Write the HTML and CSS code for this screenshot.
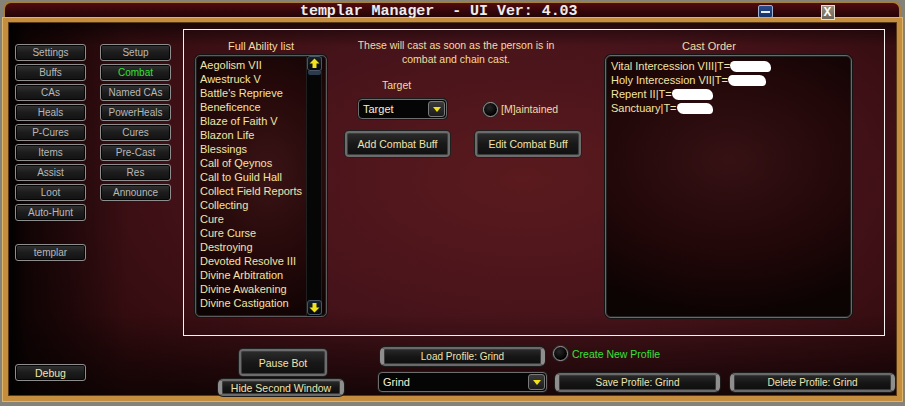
FILE: index.html
```html
<!DOCTYPE html>
<html>
<head>
<meta charset="utf-8">
<link rel="stylesheet" href="styles.css">
</head>
<body>
<div class="window">
  <div class="titlebar">
    <span class="title">templar Manager  - UI Ver: 4.03</span>
    <span class="tb-btn tb-min"><span class="dash"></span></span>
    <span class="tb-btn tb-close">X</span>
  </div>
  <div class="frame">
    <nav class="nav">
      <div class="nav-grid">
        <button class="btn">Settings</button>
        <button class="btn">Setup</button>
        <button class="btn">Buffs</button>
        <button class="btn active">Combat</button>
        <button class="btn">CAs</button>
        <button class="btn">Named CAs</button>
        <button class="btn">Heals</button>
        <button class="btn">PowerHeals</button>
        <button class="btn">P-Cures</button>
        <button class="btn">Cures</button>
        <button class="btn">Items</button>
        <button class="btn">Pre-Cast</button>
        <button class="btn">Assist</button>
        <button class="btn">Res</button>
        <button class="btn">Loot</button>
        <button class="btn">Announce</button>
        <button class="btn">Auto-Hunt</button>
      </div>
      <button class="btn nav-single templar">templar</button>
      <button class="btn nav-single debug">Debug</button>
    </nav>
    <div class="main">
      <section class="panel">
        <div class="col col-abilities">
          <div class="label label-abilities">Full Ability list</div>
          <div class="listbox">
            <ul class="items">
              <li>Aegolism VII</li>
              <li>Awestruck V</li>
              <li>Battle's Reprieve</li>
              <li>Beneficence</li>
              <li>Blaze of Faith V</li>
              <li>Blazon Life</li>
              <li>Blessings</li>
              <li>Call of Qeynos</li>
              <li>Call to Guild Hall</li>
              <li>Collect Field Reports</li>
              <li>Collecting</li>
              <li>Cure</li>
              <li>Cure Curse</li>
              <li>Destroying</li>
              <li>Devoted Resolve III</li>
              <li>Divine Arbitration</li>
              <li>Divine Awakening</li>
              <li>Divine Castigation</li>
            </ul>
            <div class="scrollbar">
              <span class="sb-btn"><svg width="13" height="13" viewBox="0 0 13 13"><path d="M6.5 1.5 L11.5 6.5 H8.5 V11 H4.5 V6.5 H1.5 Z" fill="#f2e21a"/></svg></span>
              <span class="sb-thumb"></span>
              <span class="sb-btn sb-down"><svg width="13" height="13" viewBox="0 0 13 13"><path d="M6.5 11.5 L11.5 6.5 H8.5 V2 H4.5 V6.5 H1.5 Z" fill="#f2e21a"/></svg></span>
            </div>
          </div>
        </div>
        <div class="col col-middle">
          <p class="desc">These will cast as soon as the person is in<br>combat and chain cast.</p>
          <div class="label label-target">Target</div>
          <div class="target-row">
            <div class="select select-target"><span class="select-text">Target</span><span class="select-arrow"></span></div>
            <span class="radio"></span>
            <span class="radio-label">[M]aintained</span>
          </div>
          <div class="action-row">
            <button class="bbtn bbtn-add">Add Combat Buff</button>
            <button class="bbtn bbtn-edit">Edit Combat Buff</button>
          </div>
        </div>
        <div class="col col-cast">
          <div class="label label-cast">Cast Order</div>
          <div class="castbox">
            <ul class="items cast-items">
              <li>Vital Intercession VIII|T=<span class="redact r1"></span></li>
              <li>Holy Intercession VII|T=<span class="redact r2"></span></li>
              <li>Repent II|T=<span class="redact r3"></span></li>
              <li>Sanctuary|T=<span class="redact r4"></span></li>
            </ul>
          </div>
        </div>
      </section>
      <div class="bottom">
        <div class="group-bot">
          <button class="bbtn pause">Pause Bot</button>
          <button class="pbtn hide">Hide Second Window</button>
        </div>
        <div class="group-profile">
          <div class="profile-row1">
            <button class="pbtn load">Load Profile: Grind</button>
            <span class="radio radio-new"></span>
            <span class="new-label">Create New Profile</span>
          </div>
          <div class="profile-row2">
            <div class="select select-grind"><span class="select-text">Grind</span><span class="select-arrow"></span></div>
            <button class="pbtn save">Save Profile: Grind</button>
            <button class="pbtn del">Delete Profile: Grind</button>
          </div>
        </div>
      </div>
    </div>
  </div>
</div>
</body>
</html>
```
FILE: styles.css
```css
* { box-sizing: border-box; }
html, body { margin: 0; padding: 0; }
body {
  background: #85827a;
  font-family: "Liberation Sans", Arial, sans-serif;
  width: 905px;
  height: 406px;
  overflow: hidden;
}
.window { width: 905px; height: 406px; }

/* Title bar */
.titlebar {
  height: 17px;
  margin: 1px 4px 0 3px;
  display: flex;
  align-items: center;
  border: 2px solid #a67e3a;
  border-bottom: none;
  border-radius: 8px 8px 0 0;
  background: linear-gradient(#520c0f, #34060a 55%, #220305);
}
.title {
  margin-left: 295px;
  padding-top: 2px;
  font-family: "Liberation Mono", monospace;
  font-weight: bold;
  font-size: 15px;
  line-height: 15px;
  color: #ececec;
  white-space: pre;
  letter-spacing: -0.05px;
}
.tb-btn {
  display: flex;
  align-items: center;
  justify-content: center;
}
.tb-min {
  margin-left: 180px;
  width: 15px;
  height: 13px;
  margin-top: 2px;
  background: linear-gradient(#2a4c8c, #16306a);
  border: 1px solid #9fb1cf;
  border-radius: 2px;
}
.tb-min .dash { width: 9px; height: 2px; background: #e8eef8; }
.tb-close {
  margin-left: 48px;
  width: 14px;
  height: 15px;
  margin-top: 4px;
  background: linear-gradient(#9a8f80, #6e6458);
  border: 1px solid #e6e0d4;
  color: #fbfbf6;
  font-family: "Liberation Mono", monospace;
  font-weight: bold;
  font-size: 13px;
  line-height: 13px;
}

/* Frame */
.frame {
  margin-left: 3px;
  width: 899px;
  height: 383px;
  border: 5px solid #c48e3e;
  border-top-width: 4px;
  box-shadow: inset 0 0 0 1px #5a3a14, 0 0 0 1px #dcb46a;
  display: flex;
  padding: 7px 0 0 7px;
  background:
    linear-gradient(to right, #000 0, rgba(0,0,0,.65) 18px, rgba(0,0,0,0) 120px),
    linear-gradient(to bottom, rgba(0,0,0,.55) 0, rgba(0,0,0,0) 24px, rgba(0,0,0,0) 290px, rgba(0,0,0,.6) 100%),
    radial-gradient(ellipse 60% 75% at 58% 42%, #5a1a1e, #46131a 55%, #2e0a0c 100%);
}

/* Left navigation */
.nav {
  width: 156px;
  display: flex;
  flex-direction: column;
  align-items: flex-start;
  padding: 15px 0 15px;
}
.nav-grid {
  display: grid;
  grid-template-columns: 71px 71px;
  column-gap: 14px;
  row-gap: 3px;
}
button { font-family: inherit; margin: 0; padding: 0; cursor: default; }
.btn {
  height: 17px;
  display: flex;
  align-items: center;
  justify-content: center;
  border: 1px solid #8e8e8e;
  border-radius: 3px;
  background: linear-gradient(#333, #1c1c1c 50%, #121212);
  box-shadow: inset 0 0 0 1px #060606;
  color: #b8b8b8;
  font-size: 10px;
  white-space: nowrap;
}
.btn.active { color: #35e035; }
.nav-single { width: 71px; }
.templar { margin-top: 23px; }
.debug { margin-top: auto; color: #efe7a6; font-size: 10.5px; }

/* Main */
.main {
  margin-left: 12px;
  width: 712px;
  display: flex;
  flex-direction: column;
}
.panel {
  width: 702px;
  height: 308px;
  border: 1px solid #f4f4f4;
  display: flex;
}
.col { display: flex; flex-direction: column; }
.label {
  color: #f0dca2;
  font-size: 11px;
  line-height: 14px;
  white-space: nowrap;
}
.col-abilities { margin-left: 11px; width: 132px; }
.label-abilities { height: 25px; padding-top: 9px; text-align: center; }
.listbox {
  height: 262px;
  border: 1px solid #5c5c5c;
  border-radius: 5px;
  box-shadow: 0 0 0 1px #141414, inset 0 0 0 1px #1e1e1e;
  background: radial-gradient(ellipse 90% 60% at 55% 45%, #3a1315, #230809 60%, #0e0303 100%);
  display: flex;
  overflow: hidden;
}
.items {
  list-style: none;
  margin: 0;
  padding: 2px 0 0 4px;
  flex: 1;
  min-width: 0;
  overflow: hidden;
}
.items li {
  font-size: 11px;
  line-height: 14px;
  height: 14px;
  color: #f1e4a6;
  white-space: nowrap;
}
.scrollbar {
  width: 16px;
  margin-right: 4px;
  background: #060606;
  border-left: 1px solid #1f1f1f;
  border-right: 1px solid #1f1f1f;
  display: flex;
  flex-direction: column;
  align-items: center;
}
.sb-btn {
  width: 15px;
  height: 15px;
  border: 1px solid #4a5566;
  border-radius: 3px;
  background: linear-gradient(#17202e, #06090e);
  display: flex;
  align-items: center;
  justify-content: center;
}
.sb-thumb {
  width: 13px;
  height: 4px;
  background: #2c3a4e;
  border-radius: 0 0 2px 2px;
}
.sb-down { margin-top: auto; margin-bottom: 1px; }

/* Middle column */
.col-middle { margin-left: 18px; width: 236px; }
.desc {
  margin: 8px 0 0 0;
  width: 222px;
  text-align: center;
  color: #f0dca2;
  font-size: 10.5px;
  line-height: 14px;
  white-space: nowrap;
}
.label-target { margin-top: 12px; padding-left: 37px; font-size: 10.5px; }
.target-row {
  margin-top: 7px;
  margin-left: 13px;
  display: flex;
  align-items: center;
}
.select {
  display: flex;
  align-items: center;
  height: 20px;
  border: 1px solid #6e6e6e;
  border-radius: 4px;
  background: #050505;
  box-shadow: 0 0 0 1px #1a1a1a;
}
.select-text {
  padding-left: 4px;
  color: #f4efd6;
  font-size: 11px;
}
.select-arrow {
  margin-left: auto;
  margin-right: 1px;
  width: 17px;
  height: 16px;
  border: 1px solid #7a7a7a;
  border-radius: 3px;
  background: linear-gradient(#3a3a3a, #1c1c1c);
  display: flex;
  align-items: center;
  justify-content: center;
}
.select-arrow::after {
  content: "";
  width: 0;
  height: 0;
  border-left: 4px solid transparent;
  border-right: 4px solid transparent;
  border-top: 5px solid #f2e21a;
  margin-top: 1px;
}
.select-target { width: 89px; }
.radio {
  width: 15px;
  height: 15px;
  border-radius: 50%;
  border: 1px solid #9c9c9c;
  background: radial-gradient(circle at 40% 35%, #262626, #000 70%);
  box-shadow: 0 0 0 1px #2a2a2a;
  flex: none;
}
.target-row .radio { margin-left: 36px; }
.radio-label {
  margin-left: 3px;
  color: #f0dca2;
  font-size: 10.5px;
}
.action-row {
  margin-top: 12px;
  display: flex;
  gap: 25px;
}
.bbtn {
  display: flex;
  align-items: center;
  justify-content: center;
  border: 2px solid #6c6c6c;
  border-radius: 4px;
  background: linear-gradient(#2c2c2c, #181818 50%, #101010);
  box-shadow: inset 0 0 0 1px #3e3e3e, 0 0 0 1px #202020;
  color: #efe4b0;
  font-size: 10.5px;
  white-space: nowrap;
}
.bbtn-add { width: 105px; height: 26px; }
.bbtn-edit { width: 106px; height: 26px; }

/* Cast order column */
.col-cast { margin-left: 24px; width: 247px; }
.label-cast { height: 25px; padding-top: 9px; padding-left: 77px; }
.castbox {
  height: 263px;
  border: 1px solid #6a6a6a;
  border-radius: 6px;
  box-shadow: 0 0 0 1px #141414, inset 0 0 0 1px #222;
  background: radial-gradient(ellipse 90% 60% at 50% 40%, #361114, #200708 60%, #0c0303 100%);
}
.cast-items { padding: 3px 0 0 5px; }
.cast-items li { font-size: 11px; }
.redact {
  display: inline-block;
  height: 11px;
  background: #fff;
  border-radius: 5px 7px 4px 7px;
  vertical-align: -2px;
}
.r1 { width: 41px; }
.r2 { width: 38px; }
.r3 { width: 41px; }
.r4 { width: 36px; }

/* Bottom controls */
.bottom {
  margin-top: 10px;
  display: flex;
  align-items: flex-start;
}
.group-bot {
  margin-left: 35px;
  width: 126px;
  display: flex;
  flex-direction: column;
  align-items: center;
}
.pause { width: 88px; height: 27px; margin-top: 3px; margin-left: 4px; }
.pbtn {
  display: flex;
  align-items: center;
  justify-content: center;
  height: 19px;
  border: 2px solid #6a6a6a;
  border-left: 4px solid #8e8e8e;
  border-right: 4px solid #8e8e8e;
  border-radius: 5px;
  background: linear-gradient(#2a2a2a, #161616 50%, #0e0e0e);
  box-shadow: inset 0 0 0 1px #3a3a3a, 0 0 0 1px #1c1c1c;
  color: #efe4b0;
  font-size: 10px;
  white-space: nowrap;
}
.hide { width: 126px; height: 17px; margin-top: 3px; font-size: 10.5px; }
.group-profile {
  margin-left: 34px;
  display: flex;
  flex-direction: column;
}
.profile-row1 { display: flex; align-items: flex-start; }
.load { width: 165px; margin-left: 2px; margin-top: 1px; }
.radio-new { margin-left: 8px; margin-top: 0; }
.new-label {
  margin-left: 4px;
  margin-top: 1px;
  color: #38e038;
  font-size: 10.5px;
  line-height: 14px;
}
.profile-row2 { margin-top: 6px; display: flex; align-items: flex-start; }
.select-grind { width: 169px; }
.save { width: 165px; margin-left: 8px; margin-top: 1px; }
.del { width: 165px; margin-left: 10px; margin-top: 1px; }
```
